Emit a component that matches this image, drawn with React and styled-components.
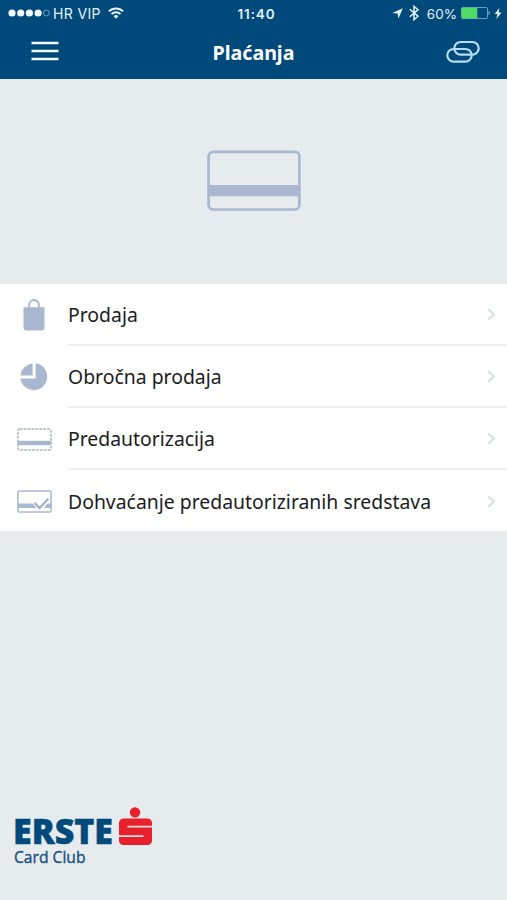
import React from "react";
import styled, { createGlobalStyle } from "styled-components";

const GlobalStyle = createGlobalStyle`
  * {
    box-sizing: border-box;
  }

  body {
    margin: 0;
    background-color: #e6ebee;
    font-family: "Noto Sans", "Open Sans", sans-serif;
  }
`;

const Screen = styled.div`
  display: flex;
  flex-direction: column;
  width: 507px;
  height: 900px;
  overflow: hidden;
  background-color: #e6ebee;
`;

const Header = styled.header`
  height: 79px;
  background-color: #00497b;
  color: #ffffff;
`;

const StatusBar = styled.div`
  display: grid;
  grid-template-columns: 1fr auto 1fr;
  align-items: center;
  height: 26px;
  padding: 0 5px 0 8px;
  font-family: Inter, "Liberation Sans", sans-serif;
  font-size: 13px;
  line-height: 16px;
  color: #e4f1fa;
`;

const StatusGroup = styled.div`
  display: flex;
  align-items: center;
  justify-content: ${(props) => props.$align || "flex-start"};
`;

const Carrier = styled.span`
  margin: 1px 7px 0 3px;
  font-size: 14px;
  letter-spacing: 0.35px;
`;

const Clock = styled.span`
  margin: 1px 0 0 3px;
  font-weight: 600;
  font-size: 13.5px;
  letter-spacing: 0.9px;
`;

const BatteryLevel = styled.span`
  margin: 1px 4px 0 8px;
  font-size: 13.5px;
`;

const NavBar = styled.div`
  display: grid;
  grid-template-columns: 1fr auto 1fr;
  align-items: center;
  height: 50px;
  padding: 0 27px 0 31px;
`;

const IconButton = styled.button`
  display: flex;
  padding: 0;
  border: none;
  background: none;
  justify-self: ${(props) => props.$align};
  cursor: pointer;
`;

const Title = styled.h1`
  margin: 3px 4px 0 0;
  font-size: 19.6px;
  font-weight: 700;
  line-height: 26px;
`;

const Hero = styled.section`
  display: flex;
  justify-content: center;
  height: 205px;
  padding-top: 71px;
`;

const Menu = styled.ul`
  margin: 0;
  padding: 0;
  height: 247px;
  list-style: none;
  background-color: #ffffff;
`;

const MenuItem = styled.li`
  display: flex;
  height: 62px;

  &:last-child > div {
    border-bottom: none;
    padding-top: 0;
  }
`;

const ItemIcon = styled.span`
  display: flex;
  align-items: center;
  justify-content: center;
  width: 68px;
`;

const ItemBody = styled.div`
  display: flex;
  flex: 1;
  align-items: center;
  justify-content: space-between;
  padding: 1px 11px 0 0;
  border-bottom: 2px solid #eceeef;
`;

const ItemLabel = styled.span`
  padding-top: 1px;
  font-size: 19.4px;
  line-height: 26px;
  color: #1c1c1e;
  white-space: nowrap;
`;

const Footer = styled.footer`
  margin-top: auto;
  padding: 0 0 31px 14px;

  svg {
    display: block;
  }
`;

const SignalDots = () => (
  <svg width="42" height="10" viewBox="0 0 42 10">
    {[4, 12.7, 21.4, 30.1].map((cx) => (
      <circle key={cx} cx={cx} cy="5" r="3.6" fill="#f2faff" />
    ))}
    <circle cx="38.4" cy="5" r="3" fill="none" stroke="#8db4d0" strokeWidth="0.8" />
  </svg>
);

const WifiIcon = () => (
  <svg width="16" height="12" viewBox="0 0 16 12" fill="none" stroke="#e4f1fa" strokeWidth="1.9">
    <path d="M0.9 4.4a10 10 0 0 1 14.2 0" />
    <path d="M3.5 7.2a6.3 6.3 0 0 1 9 0" />
    <path d="M8 11.8L5.6 9.3a3.4 3.4 0 0 1 4.8 0z" fill="#e4f1fa" stroke="none" />
  </svg>
);

const LocationIcon = styled(({ className }) => (
  <svg className={className} width="11" height="11" viewBox="0 0 11 11">
    <path d="M10.8 0.2L6.4 10.8 5.6 5.6 0.2 4.9z" fill="#e4f1fa" />
  </svg>
))`
  margin-right: 6px;
`;

const BluetoothIcon = () => (
  <svg width="10" height="16" viewBox="0 0 10 16" fill="none" stroke="#e4f1fa" strokeWidth="1.5">
    <path d="M0.8 4.3L9 11.2 5 14.7V1.3l4 3.5L0.8 11.7" />
  </svg>
);

const BatteryIcon = () => (
  <svg width="30" height="12" viewBox="0 0 30 12">
    <rect x="0.5" y="0.5" width="26" height="11" rx="1.2" fill="none" stroke="#7fa8c6" strokeWidth="0.9" />
    <rect x="0.5" y="0.8" width="15.8" height="10.6" fill="#4fdc64" />
    <path d="M27.6 3.6q2.4 2.4 0 4.8z" fill="#9fc4dc" />
  </svg>
);

const BoltIcon = styled(({ className }) => (
  <svg className={className} width="8" height="11" viewBox="0 0 8 11">
    <path d="M5.4 0L0.6 6.1h2.8L2.3 11 7.6 4.4H4.6z" fill="#e4f1fa" />
  </svg>
))`
  margin-left: 3px;
`;

const HamburgerIcon = () => (
  <svg width="28" height="20" viewBox="0 0 28 20" fill="none" stroke="#f2faff" strokeWidth="2.4">
    <path d="M0.5 2h27M0.5 10h27M0.5 18h27" />
  </svg>
);

const LinkIcon = () => (
  <svg width="34" height="24" viewBox="0 -1 34 24" fill="none" stroke="#b9ddf4" strokeWidth="2.2">
    <rect x="1.3" y="9" width="24.4" height="12.6" rx="6.3" />
    <rect x="8.3" y="2" width="24.4" height="12.6" rx="6.3" />
  </svg>
);

const CardIcon = () => (
  <svg width="94" height="61" viewBox="0 0 94 61">
    <rect x="1.6" y="1.9" width="90.8" height="57.6" rx="4.5" fill="none" stroke="#a9b8d0" strokeWidth="2.7" />
    <rect x="1" y="35" width="92" height="11.3" fill="#a9b8d0" />
  </svg>
);

const BagIcon = () => (
  <svg width="22" height="32" viewBox="0 0 22 32">
    <path d="M6.2 13V5.8a4.8 4.8 0 0 1 9.6 0V13" fill="none" stroke="#a9b8d0" strokeWidth="1.9" />
    <path d="M0.5 8.3h21v20.2a3 3 0 0 1-3 3h-15a3 3 0 0 1-3-3z" fill="#a9b8d0" />
  </svg>
);

const PieIcon = () => (
  <svg width="28" height="28" viewBox="0 0 28 28" fill="#a9b8d0">
    <path d="M15.6 0.3A13.5 13.5 0 1 1 0.3 15.6H15.6z" />
    <path d="M12.6 0.5V12.4H0.4A13.7 13.7 0 0 1 12.6 0.5z" />
  </svg>
);

const DashedCardIcon = () => (
  <svg width="35" height="23" viewBox="0 0 35 23">
    <rect
      x="0.9"
      y="0.9"
      width="33.2"
      height="21.2"
      rx="2"
      fill="none"
      stroke="#a9b3c2"
      strokeWidth="1.5"
      strokeDasharray="2.8 1.1"
    />
    <rect x="1" y="12.8" width="33" height="4.4" fill="#a9b8d0" />
  </svg>
);

const CheckedCardIcon = () => (
  <svg width="35" height="23" viewBox="0 0 35 23">
    <rect x="0.9" y="0.9" width="33.2" height="21.2" rx="1.5" fill="none" stroke="#a9b8d0" strokeWidth="1.5" />
    <path d="M1 13.6h14.5l3.8 4.4H1zM30.5 13.6H34V18h-7.2z" fill="#a9b8d0" />
    <path d="M17.3 12.8l5.3 5.2 8.7-9.3" fill="none" stroke="#a9b3c8" strokeWidth="2.4" />
  </svg>
);

const ChevronIcon = () => (
  <svg width="9" height="13" viewBox="0 0 9 13" fill="none" stroke="#d8dfe0" strokeWidth="2">
    <path d="M1.3 1.2L7 6.5 1.3 11.8" />
  </svg>
);

const ErsteLogo = () => (
  <svg width="140" height="62" viewBox="0 0 140 62">
    <text
      x="-1"
      y="37.3"
      fontFamily="Open Sans, Noto Sans, sans-serif"
      fontSize="36"
      fontWeight="800"
      fill="#00497b"
      stroke="#00497b"
      strokeWidth="0.5"
      textLength="100"
      lengthAdjust="spacingAndGlyphs"
    >
      ERSTE
    </text>
    <text
      x="0"
      y="56.3"
      fontFamily="Open Sans, Noto Sans, sans-serif"
      fontSize="16.8"
      fontWeight="400"
      fill="#1b527f"
      stroke="#1b527f"
      strokeWidth="0.4"
      textLength="71.5"
      lengthAdjust="spacingAndGlyphs"
    >
      Card Club
    </text>
    <circle cx="121" cy="5.4" r="5.2" fill="#e8202b" />
    <rect x="105" y="11.5" width="33" height="26.5" rx="4.5" fill="#e8202b" />
    <path d="M138 19.7H113.5M105 29.2h24.5" fill="none" stroke="#f6dfe2" strokeWidth="1.7" />
  </svg>
);

const menuItems = [
  { label: "Prodaja", icon: <BagIcon /> },
  { label: "Obročna prodaja", icon: <PieIcon /> },
  { label: "Predautorizacija", icon: <DashedCardIcon /> },
  { label: "Dohvaćanje predautoriziranih sredstava", icon: <CheckedCardIcon /> },
];

const App = () => {
  return (
    <>
      <GlobalStyle />
      <Screen>
        <Header>
          <StatusBar>
            <StatusGroup>
              <SignalDots />
              <Carrier>HR VIP</Carrier>
              <WifiIcon />
            </StatusGroup>
            <Clock>11:40</Clock>
            <StatusGroup $align="flex-end">
              <LocationIcon />
              <BluetoothIcon />
              <BatteryLevel>60%</BatteryLevel>
              <BatteryIcon />
              <BoltIcon />
            </StatusGroup>
          </StatusBar>
          <NavBar>
            <IconButton $align="start" aria-label="Menu">
              <HamburgerIcon />
            </IconButton>
            <Title>Plaćanja</Title>
            <IconButton $align="end" aria-label="Link">
              <LinkIcon />
            </IconButton>
          </NavBar>
        </Header>

        <Hero>
          <CardIcon />
        </Hero>

        <Menu>
          {menuItems.map((item) => (
            <MenuItem key={item.label}>
              <ItemIcon>{item.icon}</ItemIcon>
              <ItemBody>
                <ItemLabel>{item.label}</ItemLabel>
                <ChevronIcon />
              </ItemBody>
            </MenuItem>
          ))}
        </Menu>

        <Footer>
          <ErsteLogo />
        </Footer>
      </Screen>
    </>
  );
};

export default App;
